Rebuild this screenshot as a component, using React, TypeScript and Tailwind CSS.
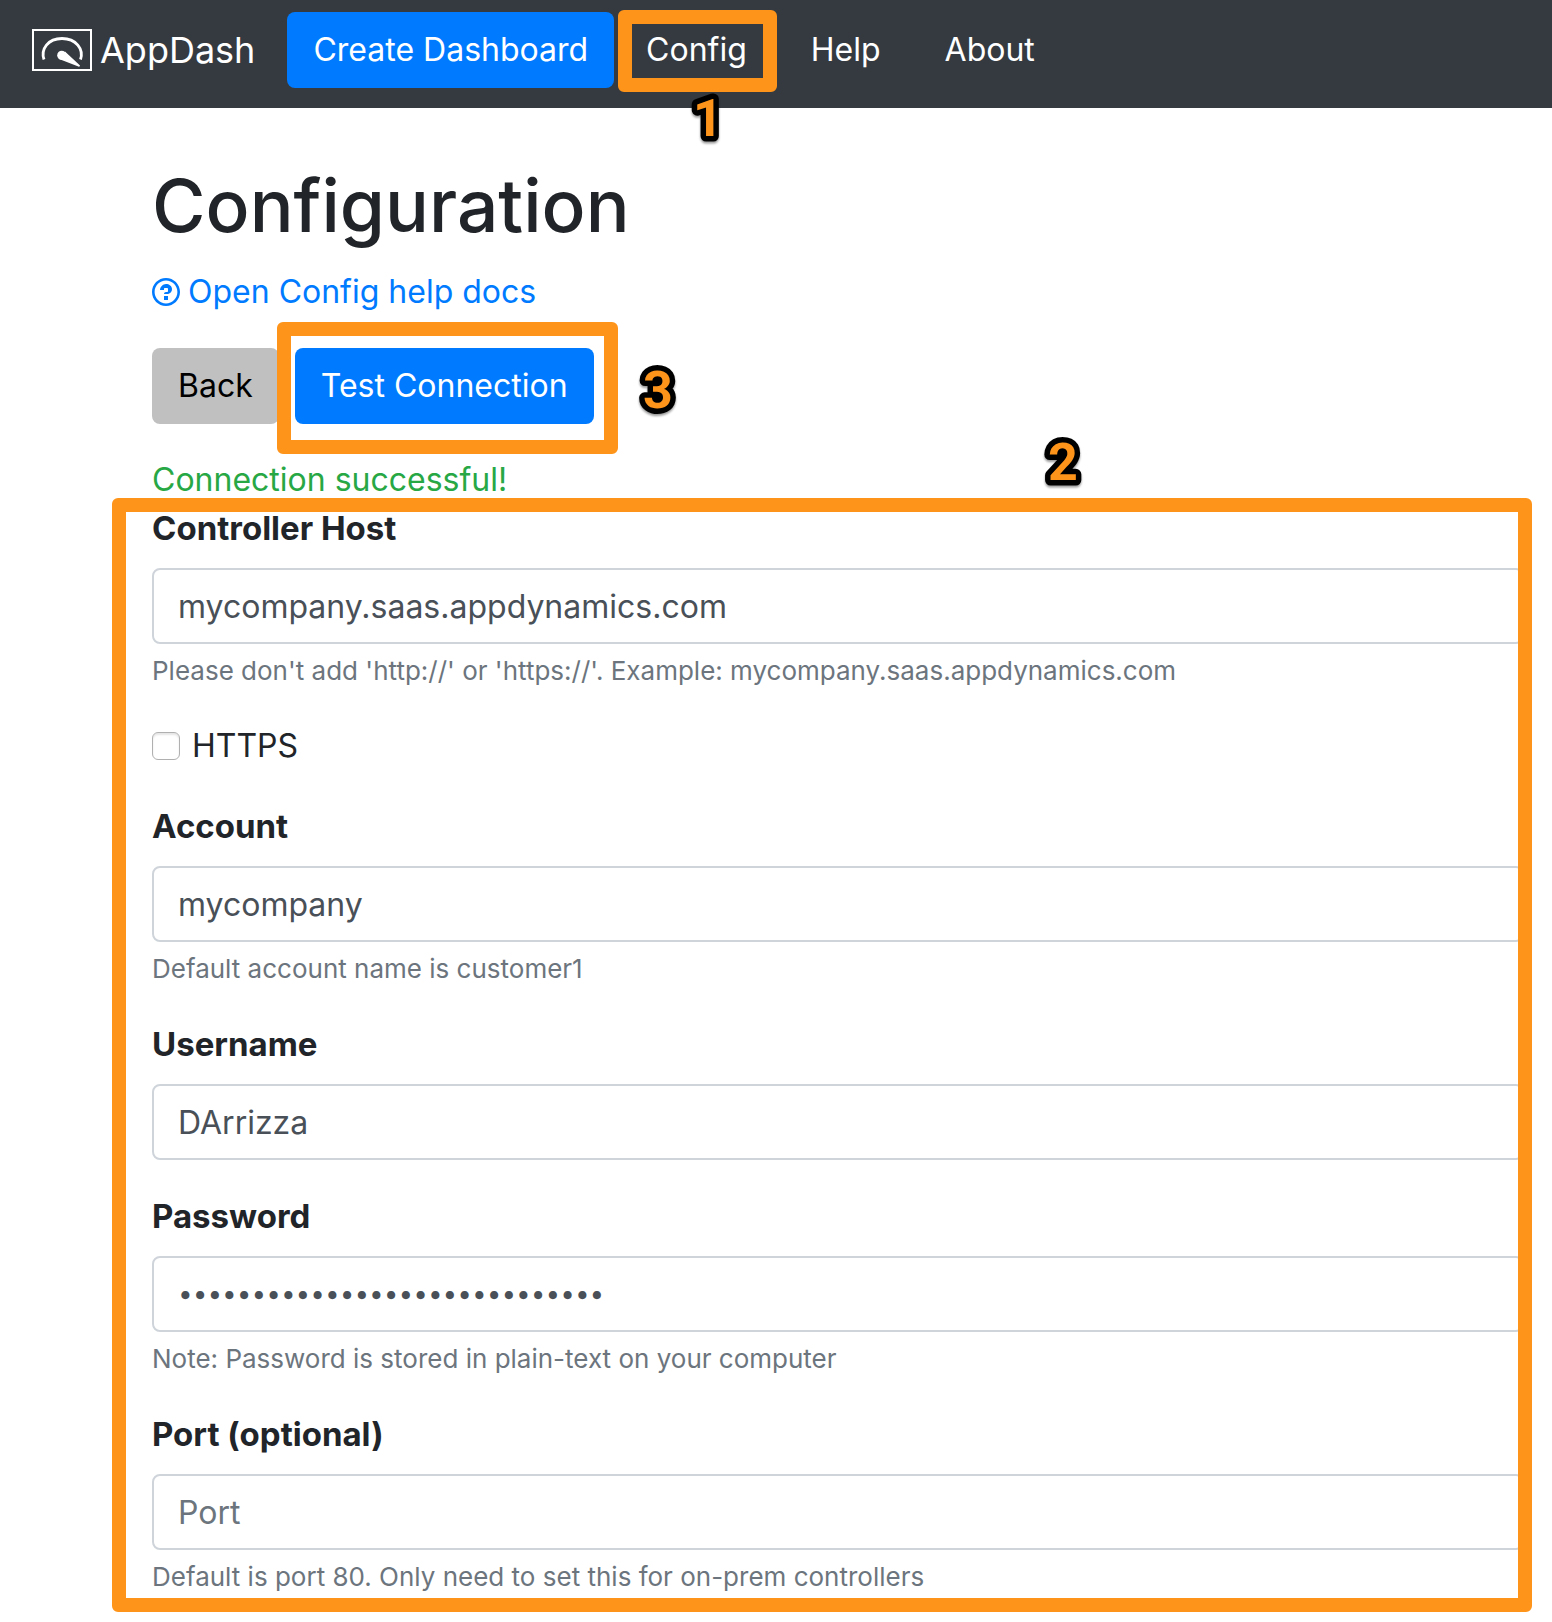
import type { ReactNode } from "react";

const FRAME = "pointer-events-none absolute rounded-md border-[14px] border-[#ff941a]";

function Marker({ digit, className }: { digit: string; className: string }) {
  return (
    <svg
      className={`pointer-events-none absolute overflow-visible ${className}`}
      width="40"
      height="52"
      viewBox="0 0 40 52"
      aria-hidden="true"
    >
      <text
        x="20"
        y="44"
        textAnchor="middle"
        fill="#ff941a"
        stroke="#000"
        strokeWidth="11"
        strokeLinejoin="round"
        className="font-['Roboto',sans-serif] text-[52px] font-bold [filter:drop-shadow(0_2px_1px_rgba(0,0,0,0.4))] [paint-order:stroke]"
      >
        {digit}
      </text>
    </svg>
  );
}

function Logo() {
  return (
    <svg width="60" height="42" viewBox="0 0 60 42" fill="none" aria-hidden="true">
      <rect x="1" y="1" width="58" height="40" stroke="#fff" strokeWidth="2" />
      <path
        d="M12 30.5C8.5 20 16 9.5 30 9.5S52 20 48.5 30.5"
        stroke="#fff"
        strokeWidth="2.8"
      />
      <path d="M33 22.5L48 36.5C47.5 38 47 37.8 46.4 37.5L27 30Z" fill="#fff" />
      <circle cx="29.7" cy="26.3" r="4.5" fill="#fff" />
    </svg>
  );
}

function QuestionIcon() {
  return (
    <svg width="28" height="32" viewBox="0 0 14 16" fill="currentColor" aria-hidden="true">
      <path d="M6 10h2v2H6v-2zm4-3.5C10 8.64 8 9 8 9H6c0-.55.45-1 1-1h.5c.28 0 .5-.22.5-.5v-1c0-.28-.22-.5-.5-.5h-1c-.28 0-.5.22-.5.5V7H4c0-1.5 1.5-3 3-3s3 1 3 2.5zM7 2.3c3.14 0 5.7 2.56 5.7 5.7s-2.56 5.7-5.7 5.7A5.71 5.71 0 0 1 1.3 8c0-3.14 2.56-5.7 5.7-5.7zM7 1C3.14 1 0 4.14 0 8s3.14 7 7 7 7-3.14 7-7-3.14-7-7-7z" />
    </svg>
  );
}

function NavLink({ children }: { children: ReactNode }) {
  return (
    <a href="#" className="block px-[26px] py-3.5">
      {children}
    </a>
  );
}

type FieldProps = {
  id: string;
  label: string;
  type?: string;
  value?: string;
  placeholder?: string;
  help?: string;
};

function Field({ id, label, type = "text", value, placeholder, help }: FieldProps) {
  const textStyle =
    type === "password"
      ? "pt-1 font-['DejaVu_Sans',sans-serif] text-[23px] font-bold"
      : "text-[32px]";
  return (
    <div className="mb-8">
      <label htmlFor={id} className="mb-4 block w-fit text-[33px] leading-[48px] font-bold">
        {label}
      </label>
      <input
        id={id}
        type={type}
        defaultValue={value}
        placeholder={placeholder}
        className={`block h-[76px] w-full rounded-lg border-2 border-[#ced4da] bg-white px-6 text-[#495057] placeholder:text-[#6c757d] ${textStyle}`}
      />
      {help && <p className="mt-2 text-[26px] leading-[38px] text-[#6c757d]">{help}</p>}
    </div>
  );
}

export default function App() {
  return (
    <div className="overflow-hidden bg-white font-['Inter',sans-serif] text-[32px] leading-[48px] text-[#212529]">
      <header className="flex h-[108px] items-start bg-[#343a40] px-8 pt-3 text-white">
        <a href="#" className="mr-8 flex h-[76px] items-center gap-2 text-[36px]">
          <Logo />
          AppDash
        </a>
        <nav className="flex items-center gap-1.5">
          <button type="button" className="h-[76px] rounded-lg bg-[#007bff] px-[26px]">
            Create Dashboard
          </button>
          <div className="flex items-center gap-3">
            <div className="relative">
              <NavLink>Config</NavLink>
              <div className={`${FRAME} -top-0.5 -right-1 -bottom-1 -left-0.5`} />
              <Marker digit="1" className="top-20 left-17" />
            </div>
            <NavLink>Help</NavLink>
            <NavLink>About</NavLink>
          </div>
        </nav>
      </header>

      <main className="pt-12 pr-7 pb-0 pl-[152px]">
        <h1 className="mb-3 text-[73px] leading-[100px] font-medium">Configuration</h1>
        <a href="#" className="flex w-fit items-center gap-2 text-[#007bff]">
          <QuestionIcon />
          Open Config help docs
        </a>
        <div className="mt-8 flex gap-4">
          <button type="button" className="h-[76px] rounded-lg bg-[#c0c0c0] px-[26px] text-black">
            Back
          </button>
          <div className="relative">
            <button type="button" className="h-[76px] rounded-lg bg-[#007bff] px-[26px] text-white">
              Test Connection
            </button>
            <div className={`${FRAME} -top-6.5 -right-6 -bottom-7.5 -left-4.5`} />
            <Marker digit="3" className="top-4 -right-21" />
          </div>
        </div>
        <p className="mt-8 text-[#28a745]">Connection successful!</p>

        <form className="relative">
          <Field
            id="host"
            label="Controller Host"
            value="mycompany.saas.appdynamics.com"
            help="Please don't add 'http://' or 'https://'. Example: mycompany.saas.appdynamics.com"
          />
          <div className="mb-8 flex items-center gap-3">
            <input
              id="https"
              type="checkbox"
              className="size-7 appearance-none rounded-md border border-[#b0b0b0] bg-white shadow-[inset_0_2px_2px_rgba(0,0,0,0.1)] checked:bg-[#007bff]"
            />
            <label htmlFor="https">HTTPS</label>
          </div>
          <Field
            id="account"
            label="Account"
            value="mycompany"
            help="Default account name is customer1"
          />
          <Field id="username" label="Username" value="DArrizza" />
          <Field
            id="password"
            label="Password"
            type="password"
            value="aaaaaaaaaaaaaaaaaaaaaaaaaaaaa"
            help="Note: Password is stored in plain-text on your computer"
          />
          <Field
            id="port"
            label="Port (optional)"
            placeholder="Port"
            help="Default is port 80. Only need to set this for on-prem controllers"
          />
          <div className={`${FRAME} -top-1.5 -right-2 -bottom-4 -left-10`} />
          <Marker digit="2" className="-top-17 right-[441px]" />
        </form>
      </main>
    </div>
  );
}
